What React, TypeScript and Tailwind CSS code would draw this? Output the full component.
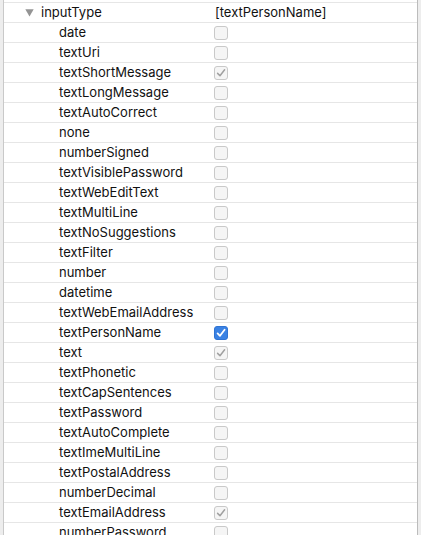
import React from "react";

const items: { name: string; state: "off" | "dis" | "on" }[] = [
  { name: "date", state: "off" },
  { name: "textUri", state: "off" },
  { name: "textShortMessage", state: "dis" },
  { name: "textLongMessage", state: "off" },
  { name: "textAutoCorrect", state: "off" },
  { name: "none", state: "off" },
  { name: "numberSigned", state: "off" },
  { name: "textVisiblePassword", state: "off" },
  { name: "textWebEditText", state: "off" },
  { name: "textMultiLine", state: "off" },
  { name: "textNoSuggestions", state: "off" },
  { name: "textFilter", state: "off" },
  { name: "number", state: "off" },
  { name: "datetime", state: "off" },
  { name: "textWebEmailAddress", state: "off" },
  { name: "textPersonName", state: "on" },
  { name: "text", state: "dis" },
  { name: "textPhonetic", state: "off" },
  { name: "textCapSentences", state: "off" },
  { name: "textPassword", state: "off" },
  { name: "textAutoComplete", state: "off" },
  { name: "textImeMultiLine", state: "off" },
  { name: "textPostalAddress", state: "off" },
  { name: "numberDecimal", state: "off" },
  { name: "textEmailAddress", state: "dis" },
  { name: "numberPassword", state: "off" },
];

function Check({ state }: { state: "off" | "dis" | "on" }) {
  if (state === "on") {
    return (
      <div className="w-[14px] h-[14px] rounded-[3px] bg-[#3a82e4] border border-[#2f73d2] flex items-center justify-center">
        <svg width="10" height="10" viewBox="0 0 10 10">
          <path d="M1.6 5.4 L4 7.8 L8.6 1.8" fill="none" stroke="#fff" strokeWidth="1.8" strokeLinecap="round" strokeLinejoin="round" />
        </svg>
      </div>
    );
  }
  return (
    <div className="w-[14px] h-[14px] rounded-[3px] bg-[#f5f5f5] border border-[#c9c9c9] flex items-center justify-center">
      {state === "dis" && (
        <svg width="10" height="10" viewBox="0 0 10 10">
          <path d="M1.6 5.4 L4 7.8 L8.6 1.8" fill="none" stroke="#a0a0a0" strokeWidth="1.5" strokeLinecap="round" strokeLinejoin="round" />
        </svg>
      )}
    </div>
  );
}

export default function App() {
  return (
    <div
      className="w-[421px] h-[535px] overflow-hidden bg-white flex text-[13px] text-[#111]"
      style={{ fontFamily: "Inter, 'Liberation Sans', sans-serif" }}
    >
      <div className="w-[3px] bg-[#ededed]" />
      <div className="w-px bg-[#c9c9c9]" />
      <div className="flex-1 flex flex-col pt-[2px]">
        <div className="h-5 shrink-0 border-t border-[#e6e6e6] flex items-center">
          <div className="w-[210px] flex items-center">
            <div className="w-[21px]" />
            <svg width="9" height="8" viewBox="0 0 9 8" className="mt-[1px]">
              <path d="M0.3 0.3 L8.7 0.3 L4.5 7.5 Z" fill="#949494" />
            </svg>
            <span className="ml-[7px]">inputType</span>
          </div>
          <span className="ml-px">[textPersonName]</span>
        </div>
        {items.map((it) => (
          <div key={it.name} className="h-5 shrink-0 border-t border-[#e6e6e6] flex items-center">
            <div className="w-[210px] pl-[55px]">{it.name}</div>
            <Check state={it.state} />
          </div>
        ))}
      </div>
      <div className="w-px bg-[#bcbcbc]" />
      <div className="w-[3px] bg-[#ededed]" />
    </div>
  );
}
